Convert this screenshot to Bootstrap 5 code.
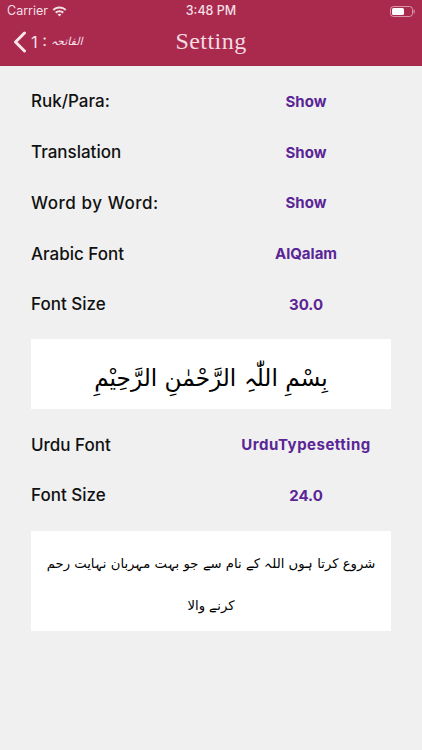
<!DOCTYPE html>
<html lang="en">
<head>
<meta charset="utf-8">
<title>Setting</title>
<link href="https://cdn.jsdelivr.net/npm/bootstrap@5.3.0/dist/css/bootstrap.min.css" rel="stylesheet">
<style>
html,body{height:100%}
body{background:#f0f0f0;font-family:Inter,"Liberation Sans",sans-serif;color:#111;overflow:hidden}
.app-head{background:#aa2a4e;color:#f6e6ea;height:66px;border-bottom:1px solid #a02a4c}
.status-line{height:22px;padding:0 7px;font-size:12.5px;color:#f3dfe4;line-height:22px}
.status-side{width:120px}
.title-line{height:43px}
.back-link{left:13px;top:0;height:40px;gap:4px;color:#f3dfe4;font-size:16.5px}
.arabic-back{font-family:"DejaVu Sans",sans-serif;font-size:11px;font-style:italic}
.page-title{font-family:"Liberation Serif",serif;font-size:24px;letter-spacing:.45px;line-height:36px;color:#f3dbe1;margin-bottom:5px}
.settings-body{padding:10.7px 31px 0}
.set-row{height:50.75px}
.set-label{font-size:17px;font-weight:500}
.wide-label{letter-spacing:.55px}
.set-value{width:170px;text-align:center;font-size:15px;font-weight:700;color:#5a2596}
.wide-value{letter-spacing:.5px}
.preview-one{height:70px;margin:9px 0 10.5px;padding-top:8px}
.preview-two{height:100px;margin:10px 0 0;padding:7px 12px 0}
.preview-one,.preview-two{background:#fff}
.ar-text{font-family:"DejaVu Sans",sans-serif;font-size:23.2px;color:#000;white-space:nowrap}
.ur-text{font-family:"DejaVu Sans",sans-serif;font-size:13.2px;line-height:42px;color:#000;text-align:center}
</style>
</head>
<body>
<header class="app-head">
  <div class="status-line d-flex justify-content-between align-items-center">
    <div class="status-side d-flex align-items-center gap-1">Carrier
      <svg width="15" height="11" viewBox="0 0 15 11" fill="#f3dfe4" aria-hidden="true"><path d="M7.5 0.5C4.8 0.5 2.4 1.6 0.6 3.3L2 4.8C3.4 3.4 5.4 2.5 7.5 2.5s4.100 .9 5.500 2.300L14.400 3.300C12.600 1.600 10.200 .5 7.500 .5zM7.500 4.200c-1.700 0-3.300 .7-4.400 1.800l1.400 1.500c.8-.8 1.900-1.300 3-1.300s2.200 .5 3 1.300L11.900 6c-1.100-1.100-2.700-1.800-4.400-1.800zM7.500 7.800c-.8 0-1.400 .3-1.900 .8l1.900 2 1.900-2c-.5-.5-1.100-.8-1.900-.8z"/></svg>
    </div>
    <div class="fw-medium">3:48 PM</div>
    <div class="status-side d-flex justify-content-end">
      <svg width="25" height="11" viewBox="0 0 25 11" aria-hidden="true"><rect x=".5" y=".5" width="22" height="10" rx="3" fill="none" stroke="#f3dfe4" stroke-opacity=".6"/><rect x="2" y="2" width="12" height="7" rx="1.500" fill="#fff"/><rect x="23.500" y="3.500" width="1.200" height="4" rx=".6" fill="#f3dfe4" fill-opacity=".6"/></svg>
    </div>
  </div>
  <div class="title-line position-relative d-flex justify-content-center align-items-center">
    <div class="back-link position-absolute d-flex align-items-center">
      <svg width="14" height="22" viewBox="0 0 14 22" fill="none" stroke="#f6e6ea" stroke-width="3" stroke-linecap="round" stroke-linejoin="round" aria-hidden="true"><path d="M11.500 2 2.500 11l9 9"/></svg>
      <span>1 :</span><span class="arabic-back" dir="rtl">الفاتحہ</span>
    </div>
    <div class="page-title">Setting</div>
  </div>
</header>
<main class="settings-body">
  <div class="set-row d-flex justify-content-between align-items-center"><span class="set-label">Ruk/Para:</span><span class="set-value">Show</span></div>
  <div class="set-row d-flex justify-content-between align-items-center"><span class="set-label">Translation</span><span class="set-value">Show</span></div>
  <div class="set-row d-flex justify-content-between align-items-center"><span class="set-label wide-label">Word by Word:</span><span class="set-value">Show</span></div>
  <div class="set-row d-flex justify-content-between align-items-center"><span class="set-label">Arabic Font</span><span class="set-value">AlQalam</span></div>
  <div class="set-row d-flex justify-content-between align-items-center"><span class="set-label">Font Size</span><span class="set-value">30.0</span></div>
  <div class="preview-one d-flex justify-content-center align-items-center"><span class="ar-text" dir="rtl">بِسْمِ اللّٰہِ الرَّحْمٰنِ الرَّحِیْمِ</span></div>
  <div class="set-row d-flex justify-content-between align-items-center"><span class="set-label">Urdu Font</span><span class="set-value wide-value">UrduTypesetting</span></div>
  <div class="set-row d-flex justify-content-between align-items-center"><span class="set-label">Font Size</span><span class="set-value">24.0</span></div>
  <div class="preview-two d-flex justify-content-center align-items-center"><div class="ur-text" dir="rtl">شروع کرتا ہوں اللہ کے نام سے جو بہت مہربان نہایت رحم کرنے والا</div></div>
</main>
<script src="https://cdn.jsdelivr.net/npm/bootstrap@5.3.0/dist/js/bootstrap.bundle.min.js"></script>
</body>
</html>
